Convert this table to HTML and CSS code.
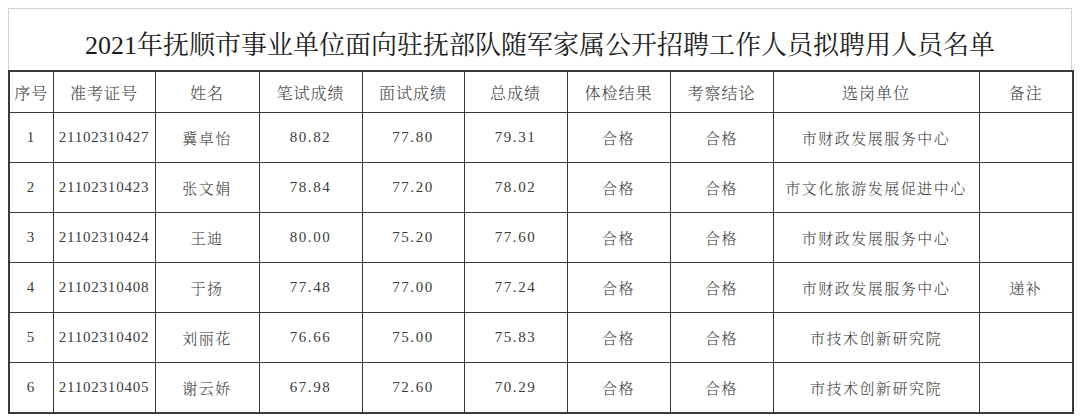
FILE: index.html
```html
<!DOCTYPE html>
<html lang="zh-CN">
<head>
<meta charset="utf-8">
<title>拟聘用人员名单</title>
<link rel="stylesheet" href="styles.css">
</head>
<body>
<div class="sheet">
  <div class="title-box">
    <h1 class="title">2021年抚顺市事业单位面向驻抚部队随军家属公开招聘工作人员拟聘用人员名单</h1>
  </div>
  <table class="grid">
    <colgroup>
      <col class="c-seq"><col class="c-id"><col class="c-name"><col class="c-s"><col class="c-s2"><col class="c-s"><col class="c-s"><col class="c-s"><col class="c-unit"><col class="c-note">
    </colgroup>
    <thead>
      <tr class="head">
        <th>序号</th><th>准考证号</th><th>姓名</th><th>笔试成绩</th><th>面试成绩</th><th>总成绩</th><th>体检结果</th><th>考察结论</th><th>选岗单位</th><th>备注</th>
      </tr>
    </thead>
    <tbody>
      <tr><td class="num">1</td><td class="num id">21102310427</td><td>冀卓怡</td><td class="num sc">80.82</td><td class="num sc">77.80</td><td class="num sc">79.31</td><td>合格</td><td>合格</td><td>市财政发展服务中心</td><td></td></tr>
      <tr><td class="num">2</td><td class="num id">21102310423</td><td>张文娟</td><td class="num sc">78.84</td><td class="num sc">77.20</td><td class="num sc">78.02</td><td>合格</td><td>合格</td><td>市文化旅游发展促进中心</td><td></td></tr>
      <tr><td class="num">3</td><td class="num id">21102310424</td><td>王迪</td><td class="num sc">80.00</td><td class="num sc">75.20</td><td class="num sc">77.60</td><td>合格</td><td>合格</td><td>市财政发展服务中心</td><td></td></tr>
      <tr><td class="num">4</td><td class="num id">21102310408</td><td>于扬</td><td class="num sc">77.48</td><td class="num sc">77.00</td><td class="num sc">77.24</td><td>合格</td><td>合格</td><td>市财政发展服务中心</td><td>递补</td></tr>
      <tr><td class="num">5</td><td class="num id">21102310402</td><td>刘丽花</td><td class="num sc">76.66</td><td class="num sc">75.00</td><td class="num sc">75.83</td><td>合格</td><td>合格</td><td>市技术创新研究院</td><td></td></tr>
      <tr><td class="num">6</td><td class="num id">21102310405</td><td>谢云娇</td><td class="num sc">67.98</td><td class="num sc">72.60</td><td class="num sc">70.29</td><td>合格</td><td>合格</td><td>市技术创新研究院</td><td></td></tr>
    </tbody>
  </table>
</div>
</body>
</html>
```

FILE: styles.css
```css
html, body {
  margin: 0;
  padding: 0;
  background: #ffffff;
}

body {
  font-family: "Liberation Serif", "Noto Serif CJK SC", "Noto Sans CJK SC", serif;
  color: #3a3a3a;
}

.sheet {
  width: 1064px;
  margin: 8px 0 0 8px;
}

.title-box {
  height: 62px;
  box-sizing: border-box;
  border: 1px solid #d2d2d2;
  border-bottom: none;
  display: flex;
  align-items: center;
  justify-content: center;
  padding-top: 6px;
}

.title {
  margin: 0;
  font-size: 26px;
  font-weight: 400;
  color: #1c1c1c;
  letter-spacing: 0;
  white-space: nowrap;
}

.grid {
  width: 1064px;
  border-collapse: collapse;
  table-layout: fixed;
  border: 2px solid #3a3a3a;
}

.c-seq { width: 44px; }
.c-id { width: 102px; }
.c-name { width: 104px; }
.c-s { width: 103px; }
.c-s2 { width: 102px; }
.c-unit { width: 206px; }
.c-note { width: 94px; }

.grid th,
.grid td {
  border: 1px solid #383838;
  text-align: center;
  vertical-align: middle;
  padding: 0;
  white-space: nowrap;
  overflow: hidden;
}

.grid th {
  height: 40px;
  font-size: 16px;
  font-weight: 300;
  color: #3c3c3c;
  letter-spacing: 1px;
}

.grid td {
  height: 49px;
  font-size: 15px;
  font-weight: 300;
  letter-spacing: 1.5px;
  color: #3c3c3c;
}

.grid td.num {
  font-size: 15px;
  font-weight: 400;
}

.grid td.id {
  letter-spacing: 0.8px;
}

.grid td.sc {
  letter-spacing: 1.6px;
}
```
